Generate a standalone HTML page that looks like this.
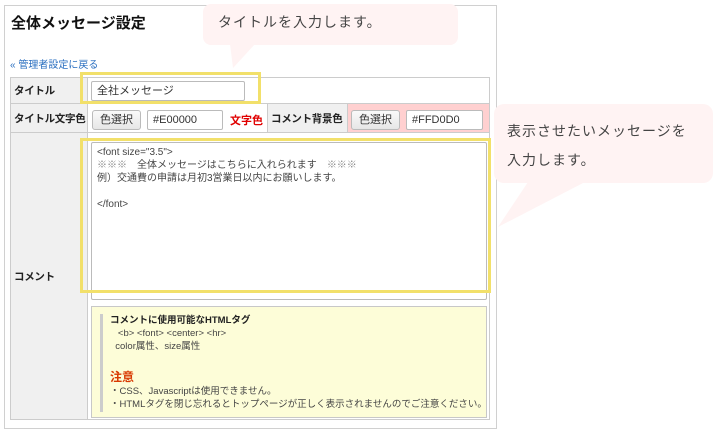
<!DOCTYPE html>
<html><head><meta charset="utf-8"><style>
*{margin:0;padding:0;box-sizing:border-box}
body{width:717px;height:433px;background:#fff;position:relative;overflow:hidden;font-family:"Liberation Sans","Noto Sans CJK JP",sans-serif;color:#222}
.a{position:absolute}
.cell{position:absolute;border:1px solid #ccc}
.lab{background:#f0f0f0;font-size:10.5px;font-weight:bold;padding-left:3px;display:flex;align-items:center;white-space:nowrap;letter-spacing:-0.3px}
.btn{position:absolute;background:linear-gradient(#fafafa,#e6e6e6);border:1px solid #bbb;border-radius:3px;font-size:11px;text-align:center;line-height:18px;color:#333}
.inp{position:absolute;background:#fff;border:1px solid #bbb;border-radius:2px;font-size:11px;padding-left:5px;line-height:18px;color:#333}
.t{font-size:10px;line-height:13px;color:#444}
</style></head><body>
<div class="a" style="left:4px;top:5px;width:493px;height:424px;border:1px solid #d0d0d0"></div>
<div class="a" style="left:11px;top:12px;font-size:15px;font-weight:bold;color:#111">全体メッセージ設定</div>
<div class="a" style="left:10px;top:56px;font-size:10px;color:#2a6fc0">« 管理者設定に戻る</div>

<div class="a" style="left:10px;top:77px;width:480px;height:343px;border:1px solid #c8c8c8;background:#fff"></div>
<div class="cell lab" style="left:10px;top:77px;width:78px;height:27px">タイトル</div>
<div class="cell" style="left:87px;top:77px;width:403px;height:27px"></div>
<div class="inp" style="left:91px;top:81px;width:154px;height:20px">全社メッセージ</div>

<div class="cell lab" style="left:10px;top:103px;width:78px;height:30px">タイトル文字色</div>
<div class="cell" style="left:87px;top:103px;width:181px;height:30px"></div>
<div class="btn" style="left:92px;top:110px;width:49px;height:20px">色選択</div>
<div class="inp" style="left:147px;top:110px;width:76px;height:20px">#E00000</div>
<div class="a" style="left:230px;top:112px;font-size:11px;font-weight:bold;color:#e00000">文字色</div>
<div class="cell lab" style="left:267px;top:103px;width:81px;height:30px">コメント背景色</div>
<div class="cell" style="left:347px;top:103px;width:143px;height:30px;background:#ffd0d0"></div>
<div class="btn" style="left:351px;top:110px;width:49px;height:20px">色選択</div>
<div class="inp" style="left:406px;top:110px;width:77px;height:20px">#FFD0D0</div>

<div class="cell lab" style="left:10px;top:132px;width:78px;height:288px">コメント</div>
<div class="cell" style="left:87px;top:132px;width:403px;height:288px"></div>
<div class="a" style="left:91px;top:142px;width:396px;height:158px;border:1px solid #bbb;border-radius:2px;padding:3px 5px" >
<div class="t" style="line-height:13px">&lt;font size="3.5"&gt;<br><span style="color:#888">※※※</span>　全体メッセージはこちらに入れられます　<span style="color:#888">※※※</span><br>例）交通費の申請は月初3営業日以内にお願いします。<br><br>&lt;/font&gt;</div></div>
<div class="a" style="left:91px;top:306px;width:396px;height:112px;border:1px solid #c8c8c8;background:#fdfdd8"></div>
<div class="a" style="left:100px;top:314px;width:3px;height:98px;background:#ccc"></div>
<div class="a t" style="left:110px;top:314px;font-size:9.5px;line-height:13px"><b style="color:#222">コメントに使用可能なHTMLタグ</b><br>&nbsp;&nbsp;&nbsp;&lt;b&gt; &lt;font&gt; &lt;center&gt; &lt;hr&gt;<br>&nbsp;&nbsp;color属性、size属性</div>
<div class="a" style="left:110px;top:368px;font-size:12px;color:#d83800;font-weight:bold">注意</div>
<div class="a t" style="left:110px;top:385px;font-size:9.5px;line-height:13px">・CSS、Javascriptは使用できません。<br>・HTMLタグを閉じ忘れるとトップページが正しく表示されませんのでご注意ください。</div>

<div class="a" style="left:80px;top:72px;width:181px;height:32px;border:3px solid #f2e06a"></div>
<div class="a" style="left:80px;top:138px;width:411px;height:155px;border:3px solid #f2e06a"></div>

<svg class="a" style="left:0;top:0" width="717" height="433">
<path d="M230 44 L233 68 L255 44 Z" fill="#fff3f3"/>
<path d="M528 182 L498 227 L585 182 Z" fill="#fff3f3"/>
</svg>
<div class="a" style="left:203px;top:4px;width:255px;height:41px;background:#fff3f3;border-radius:8px;font-size:14px;color:#444;padding:8px 0 0 15px;letter-spacing:1px">タイトルを入力します。</div>
<div class="a" style="left:494px;top:104px;width:219px;height:79px;background:#fff3f3;border-radius:10px;font-size:14px;color:#444;padding:13px 0 0 13px;line-height:29px;letter-spacing:1px">表示させたいメッセージを<br>入力します。</div>
</body></html>
